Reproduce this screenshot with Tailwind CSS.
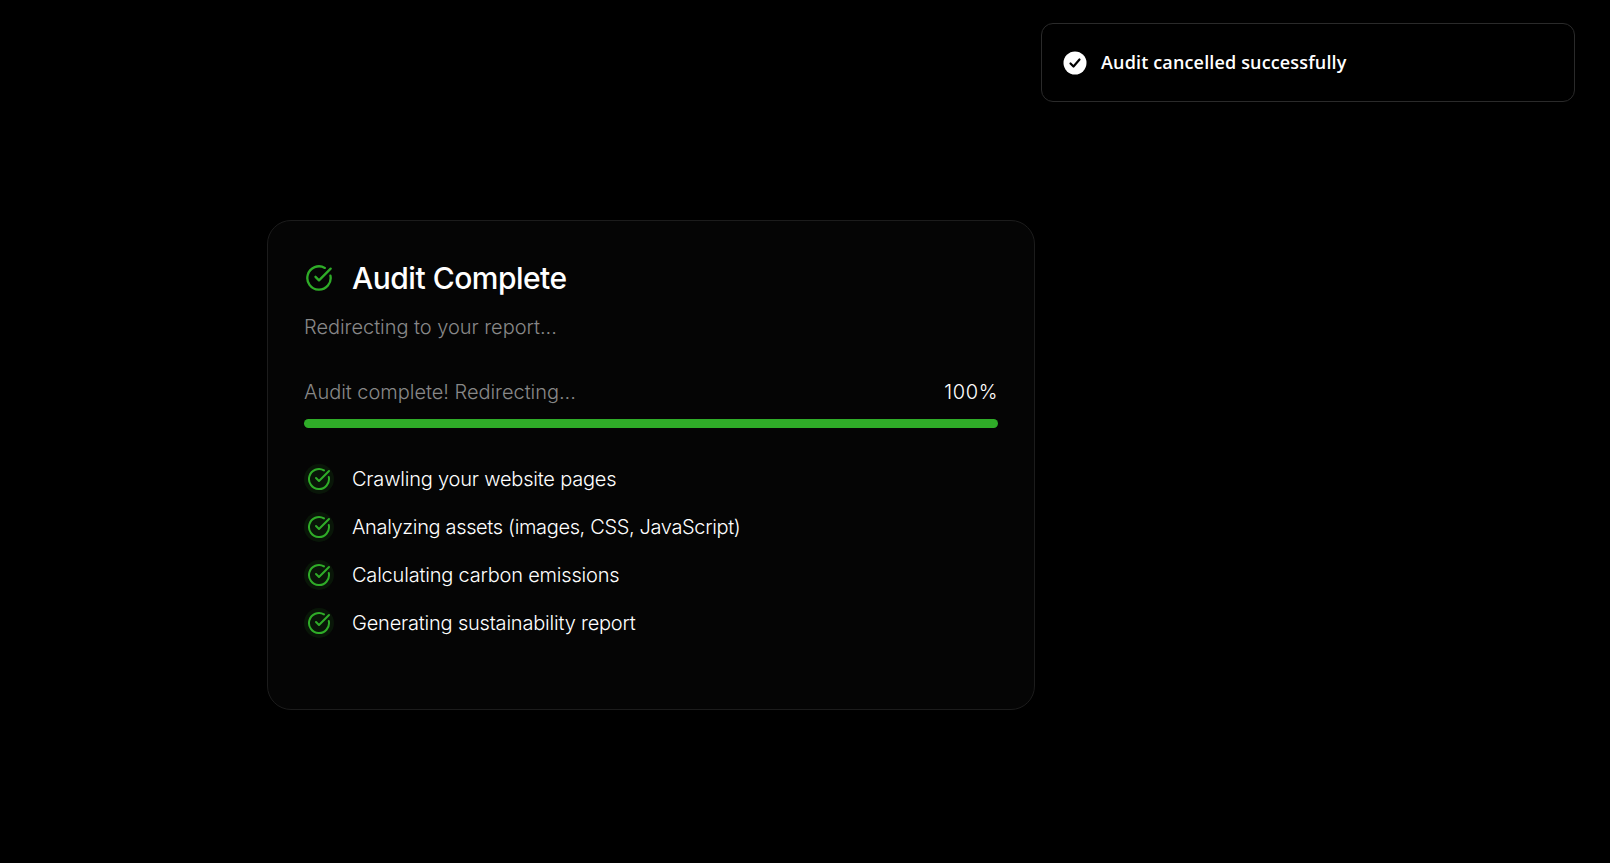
<!DOCTYPE html>
<html><head><meta charset="utf-8"><script src="https://cdn.jsdelivr.net/npm/@tailwindcss/browser@4"></script></head>
<body class="bg-black">
<div class="relative w-[1610px] h-[863px] overflow-hidden bg-black font-['Inter',sans-serif] text-white">
  <div class="absolute left-[1041px] top-[23px] w-[534px] h-[79px] rounded-xl border border-[#2a2a2a] bg-black flex items-center gap-[14px] pl-[21px]">
    <svg class="w-[24px] h-[24px]" viewBox="0 0 24 24"><circle cx="12" cy="12" r="11.5" fill="#fff"/><path d="M7.5 12.5l3 3 6-7" fill="none" stroke="#000" stroke-width="2.2" stroke-linecap="round" stroke-linejoin="round"/></svg>
    <span class="font-['Open_Sans',sans-serif] font-semibold text-[18px] tracking-[0.15px] text-white">Audit cancelled successfully</span>
  </div>
  <div class="pl-[267px] pt-[220px]">
    <div class="w-[768px] h-[490px] rounded-3xl border border-[#1c1c1c] bg-[#050505] px-9 pt-[37px]">
      <div class="flex items-center gap-[18px] h-[40px]">
        <span class="w-[30px] flex justify-center"><svg class="w-[28px] h-[28px]" viewBox="0 0 24 24" fill="none" stroke="#2fac28" stroke-width="2" stroke-linecap="round" stroke-linejoin="round"><path d="M21.8 10A10 10 0 1 1 17 3.34"/><path d="m9 11 3 3L22 4"/></svg></span>
        <h1 class="text-[30px] font-medium tracking-[-0.5px] leading-[40px]">Audit Complete</h1>
      </div>
      <p class="mt-[15px] text-[20px] font-light tracking-[-0.03px] leading-[28px] text-[#888888]">Redirecting to your report...</p>
      <div class="mt-[37px] flex justify-between items-center text-[20px] font-light leading-[28px]">
        <span class="text-[#888888] tracking-[-0.03px]">Audit complete! Redirecting...</span><span class="tracking-[0.6px]">100%</span>
      </div>
      <div class="mt-[13px] h-[9px] rounded-full bg-[#2fac28]"></div>
      <ul class="mt-[36px] flex flex-col gap-[18px] text-[20px] font-light tracking-[-0.2px] leading-[28px]">
        <li class="flex items-center gap-[18px]"><span class="w-[30px] h-[30px] rounded-full bg-[#2fac28]/10 flex items-center justify-center"><svg class="w-[24px] h-[24px]" viewBox="0 0 24 24" fill="none" stroke="#2fac28" stroke-width="2" stroke-linecap="round" stroke-linejoin="round"><path d="M21.8 10A10 10 0 1 1 17 3.34"/><path d="m9 11 3 3L22 4"/></svg></span>Crawling your website pages</li>
        <li class="flex items-center gap-[18px] tracking-[-0.35px]"><span class="w-[30px] h-[30px] rounded-full bg-[#2fac28]/10 flex items-center justify-center"><svg class="w-[24px] h-[24px]" viewBox="0 0 24 24" fill="none" stroke="#2fac28" stroke-width="2" stroke-linecap="round" stroke-linejoin="round"><path d="M21.8 10A10 10 0 1 1 17 3.34"/><path d="m9 11 3 3L22 4"/></svg></span>Analyzing assets (images, CSS, JavaScript)</li>
        <li class="flex items-center gap-[18px]"><span class="w-[30px] h-[30px] rounded-full bg-[#2fac28]/10 flex items-center justify-center"><svg class="w-[24px] h-[24px]" viewBox="0 0 24 24" fill="none" stroke="#2fac28" stroke-width="2" stroke-linecap="round" stroke-linejoin="round"><path d="M21.8 10A10 10 0 1 1 17 3.34"/><path d="m9 11 3 3L22 4"/></svg></span>Calculating carbon emissions</li>
        <li class="flex items-center gap-[18px]"><span class="w-[30px] h-[30px] rounded-full bg-[#2fac28]/10 flex items-center justify-center"><svg class="w-[24px] h-[24px]" viewBox="0 0 24 24" fill="none" stroke="#2fac28" stroke-width="2" stroke-linecap="round" stroke-linejoin="round"><path d="M21.8 10A10 10 0 1 1 17 3.34"/><path d="m9 11 3 3L22 4"/></svg></span>Generating sustainability report</li>
      </ul>
    </div>
  </div>
</div>
</body></html>
